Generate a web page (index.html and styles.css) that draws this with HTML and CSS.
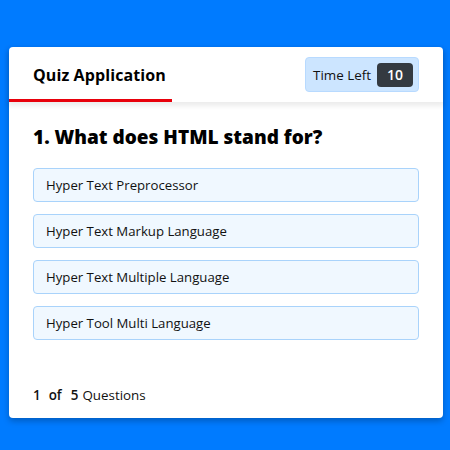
FILE: index.html
```html
<!DOCTYPE html>
<html lang="en">
<head>
<meta charset="utf-8">
<title>Quiz Application</title>
<link rel="stylesheet" href="styles.css">
</head>
<body>
<div class="quiz-box">
  <header class="quiz-header">
    <div class="title">Quiz Application</div>
    <div class="timer">
      <span class="time-left-txt">Time Left</span>
      <span class="timer-sec">10</span>
    </div>
    <div class="time-line"></div>
  </header>
  <section class="quiz-body">
    <div class="que-text">1. What does HTML stand for?</div>
    <div class="option-list">
      <div class="option">Hyper Text Preprocessor</div>
      <div class="option">Hyper Text Markup Language</div>
      <div class="option">Hyper Text Multiple Language</div>
      <div class="option">Hyper Tool Multi Language</div>
    </div>
  </section>
  <footer class="quiz-footer">
    <div class="total-que"><b class="n1">1</b><b class="of">of</b><b class="n5">5</b><span>Questions</span></div>
  </footer>
</div>
</body>
</html>
```

FILE: styles.css
```css
* { box-sizing: border-box; }
html, body { margin: 0; padding: 0; }
body {
  background: #007bff;
  font-family: "Open Sans", "Noto Sans", sans-serif;
  color: #111;
  padding: 47px 7px 0 9px;
  height: 450px;
}
.quiz-box {
  width: 434px;
  background: #fff;
  border-radius: 4px;
  box-shadow: 0 3px 6px rgba(0, 0, 0, 0.25);
}
.quiz-header {
  position: relative;
  height: 55px;
  padding: 0 24px;
  display: flex;
  align-items: center;
  justify-content: space-between;
  box-shadow: 0 3px 5px 1px rgba(0, 0, 0, 0.08);
  z-index: 1;
}
.title {
  font-size: 16px;
  font-weight: 700;
  color: #000;
  letter-spacing: 0.1px;
}
.timer {
  width: 114px;
  height: 35px;
  background: #cce5ff;
  border: 1px solid #b8daff;
  border-radius: 4px;
  padding: 0 5px 0 7px;
  display: flex;
  align-items: center;
  justify-content: space-between;
}
.time-left-txt {
  font-size: 13.4px;
  color: #111;
}
.timer-sec {
  width: 36px;
  height: 24px;
  background: #343a40;
  border-radius: 4px;
  color: #fff;
  font-size: 14px;
  font-weight: 600;
  display: flex;
  align-items: center;
  justify-content: center;
}
.time-line {
  position: absolute;
  left: 0;
  bottom: 0;
  width: 163px;
  height: 3px;
  background: #e8000b;
}
.quiz-body {
  padding: 20px 24px 31px;
}
.que-text {
  font-size: 19px;
  font-weight: 800;
  line-height: 30px;
  color: #000;
}
.option-list {
  padding-top: 16px;
  display: flex;
  flex-direction: column;
  gap: 12px;
}
.option {
  background: #f0f8ff;
  border: 1px solid #a9d3fb;
  border-radius: 4px;
  padding: 6px 12px;
  line-height: 20px;
  font-size: 13.2px;
  color: #111;
}
.quiz-footer {
  height: 47px;
  padding: 0 24px;
  display: flex;
  align-items: center;
}
.total-que {
  display: flex;
  font-size: 13.4px;
  color: #111;
}
.total-que b {
  font-weight: 600;
}
.total-que .n1 { margin-right: 8px; }
.total-que .of { margin-right: 9px; }
.total-que .n5 { margin-right: 4px; }
```
